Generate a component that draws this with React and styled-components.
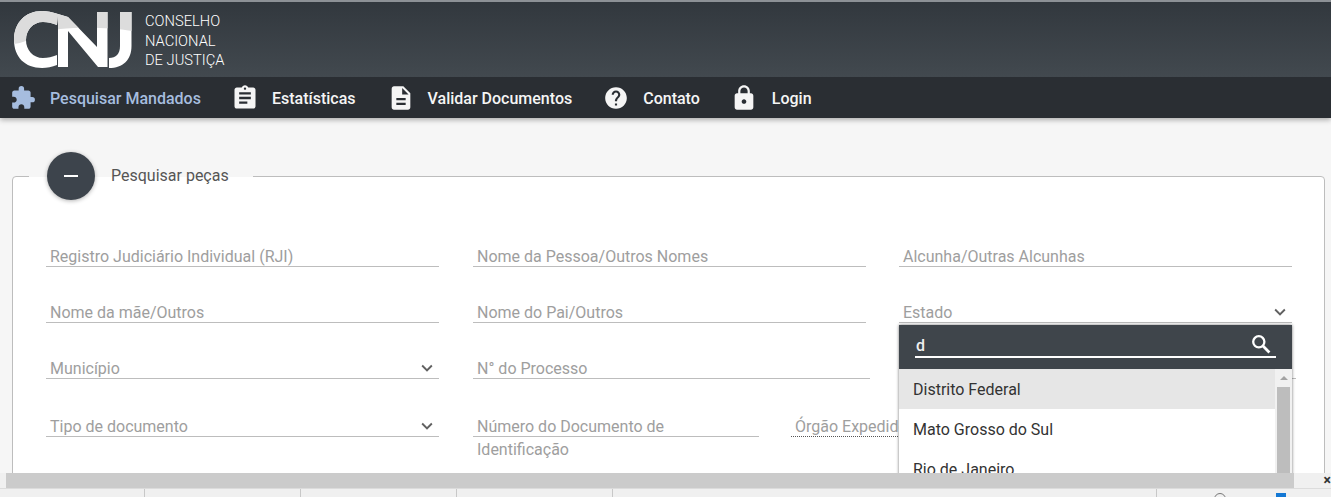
import React from 'react';
import styled, { createGlobalStyle } from 'styled-components';
import {
  MdAssignment,
  MdDescription,
  MdExtension,
  MdHelp,
  MdLock,
  MdExpandMore,
} from 'react-icons/md';

const GlobalStyle = createGlobalStyle`
  html, body {
    margin: 0;
    padding: 0;
    height: 100%;
    overflow: hidden;
    background: #f6f6f6;
    font-family: Roboto, "Liberation Sans", sans-serif;
  }
  #root {
    height: 100%;
  }
`;

const Page = styled.div`
  height: 497px;
  display: flex;
  flex-direction: column;
  overflow: hidden;
`;

const Header = styled.header`
  position: relative;
  z-index: 2;
  flex: none;
  box-shadow: 0 2px 5px rgba(0, 0, 0, 0.3);
`;

const Brand = styled.div`
  height: 75px;
  display: flex;
  align-items: center;
  padding-left: 14px;
  gap: 13px;
  border-top: 2px solid #8d9196;
  background: linear-gradient(to bottom, #32383e, #42494f);
`;

const BrandName = styled.div`
  font-size: 14.7px;
  font-weight: 300;
  line-height: 19.5px;
  color: #fff;
  padding-top: 4px;
`;

const Nav = styled.nav`
  height: 41px;
  box-sizing: border-box;
  display: flex;
  align-items: center;
  padding: 1px 0 0 8px;
  background: #2a2e33;
`;

const NavItem = styled.a`
  display: flex;
  align-items: center;
  gap: ${(p) => p.$gap || 13}px;
  margin-right: ${(p) => p.$after || 30}px;
  font-size: 16px;
  font-weight: 500;
  color: ${(p) => (p.$active ? '#a6bddf' : '#f5f5f5')};
  svg {
    flex: none;
  }
`;

const NavIconSlot = styled.span`
  display: flex;
  flex: none;
  width: ${(p) => p.$w}px;
  justify-content: center;
`;

const Main = styled.main`
  position: relative;
  flex: 1;
  min-height: 0;
  overflow: hidden;
  padding: 58px 6px 0 12px;
`;

const Card = styled.section`
  position: relative;
  height: 400px;
  box-sizing: border-box;
  background: #fff;
  border: 1px solid #bdbdbd;
  border-radius: 4px 4px 0 0;
  padding: 66px 33px 0 33px;
`;

const Legend = styled.div`
  position: absolute;
  left: 16px;
  top: -25px;
  display: flex;
  align-items: center;
  gap: 16px;
  padding: 0 24px 0 18px;
  height: 48px;
  background: linear-gradient(to bottom, #f6f6f6 0, #f6f6f6 25px, #fff 25px);
`;

const RoundButton = styled.button`
  width: 48px;
  height: 48px;
  border: 0;
  border-radius: 50%;
  padding: 0;
  background: #3d444c;
  box-shadow: 0 1px 4px rgba(0, 0, 0, 0.3);
  display: flex;
  align-items: center;
  justify-content: center;
`;

const Minus = styled.span`
  display: block;
  width: 14px;
  height: 2px;
  background: #fff;
`;

const LegendText = styled.span`
  font-size: 16px;
  color: #555;
  margin-top: -1px;
`;

const Row = styled.div`
  display: flex;
  margin-bottom: ${(p) => p.$after || 32}px;
`;

const Field = styled.div`
  flex: none;
  width: ${(p) => p.$w || 393}px;
  margin-right: ${(p) => p.$gap || 0}px;
`;

const FieldLine = styled.div`
  height: 24px;
  box-sizing: border-box;
  display: flex;
  align-items: center;
  justify-content: space-between;
  padding: 3px 1px 0 4px;
  border-bottom: 1px ${(p) => (p.$dotted ? 'dotted #555' : 'solid #bdbdbd')};
  font-size: 16px;
  color: #9e9e9e;
  white-space: nowrap;
  overflow: hidden;
`;

const Chevron = styled(MdExpandMore)`
  color: #616161;
  flex: none;
`;

const SecondLine = styled.div`
  font-size: 16px;
  color: #9e9e9e;
  padding: 3px 0 0 4px;
`;

const Dropdown = styled.div`
  position: absolute;
  left: 899px;
  top: 207px;
  width: 393px;
  height: 200px;
  background: #fff;
  box-shadow: 0 0 3px rgba(0, 0, 0, 0.55);
  z-index: 1;
`;

const SearchHead = styled.div`
  height: 44px;
  box-sizing: border-box;
  background: #3f454b;
  padding: 9px 16px 0 16px;
`;

const SearchBox = styled.div`
  height: 24px;
  box-sizing: border-box;
  display: flex;
  align-items: center;
  justify-content: space-between;
  border-bottom: 2px solid #fff;
  padding: 1px 0 0 1px;
  font-size: 16px;
  font-weight: 500;
  color: #f0f0f0;
  svg {
    flex: none;
    margin-right: 5px;
    margin-top: -3px;
  }
`;

const ListArea = styled.div`
  display: flex;
`;

const Options = styled.div`
  flex: 1;
`;

const Option = styled.div`
  height: 40px;
  display: flex;
  align-items: center;
  padding: 1px 0 0 14px;
  box-sizing: border-box;
  font-size: 16px;
  color: #333;
  background: ${(p) => (p.$active ? '#e6e6e6' : '#fff')};
`;

const ListScroll = styled.div`
  flex: none;
  width: 17px;
  height: 156px;
  box-sizing: border-box;
  padding: 0 2px;
  background: #f1f1f1;
  display: flex;
  flex-direction: column;
`;

const ScrollArrow = styled.span`
  display: block;
  align-self: center;
  margin: 7px 0 7px;
  border-left: 4px solid transparent;
  border-right: 4px solid transparent;
  border-bottom: 4px solid #a3a3a3;
`;

const ScrollThumb = styled.span`
  display: block;
  flex: 1;
  background: #bdbdbd;
`;

const PageScrollbar = styled.div`
  position: relative;
  z-index: 2;
  flex: none;
  height: 15px;
  display: flex;
  background: #f0f0f0;
  padding-left: 6px;
`;

const PageThumb = styled.div`
  width: 1288px;
  background: #cbcbcb;
`;

const CloseMark = styled.span`
  margin-left: auto;
  font-size: 14px;
  line-height: 14px;
  font-weight: 700;
  color: #333;
`;

const StatusBar = styled.footer`
  position: relative;
  z-index: 2;
  flex: none;
  height: 9px;
  box-sizing: border-box;
  border-top: 1px solid #dcdcdc;
  background: #f0f0f0;
  display: flex;
  overflow: hidden;
`;

const StatusCell = styled.div`
  flex: none;
  width: ${(p) => p.$w}px;
  box-sizing: border-box;
  border-right: 1px solid #c8c8c8;
`;

const ZoomGlyph = styled.span`
  flex: none;
  width: 12px;
  height: 12px;
  box-sizing: border-box;
  margin: 4px 50px 0 57px;
  border: 1px solid #777;
  border-radius: 50%;
`;

const BlueMark = styled.span`
  flex: none;
  width: 10px;
  height: 12px;
  margin-top: 4px;
  background: #1478d4;
`;

function LogoShapes({ color }) {
  return (
    <g fill={color}>
      <path d="M58 14 C52 12 47 11 42 11 C25 11 14 23 14 40 C14 57 25 68 42 68 C47 68 52 67 57 65 L57 55 C52 57 48 58 43 58 C33 58 26 50 26 40 C26 30 33 22 43 22 C48 22 52 23 57 25 Z" />
      <path d="M58 14 L68 17 L68 67 L58 67 Z" />
      <path d="M68 17 L97 47 L97 12 L107.5 12 L107.5 67 L98 67 L68 31 Z" />
      <path d="M120 12 L131.5 12 L131.5 46 C131.5 60 123 68 109 68 L109 58 C116 58 120 54 120 46 Z" />
    </g>
  );
}

function CnjLogo() {
  return (
    <svg width="118" height="58" viewBox="14 11 118 58">
      <defs>
        <clipPath id="logo-top">
          <path d="M14 11 H132 V31 C110 27 80 27 60 29 C40 32 30 42 14 44 Z" />
        </clipPath>
      </defs>
      <LogoShapes color="#ffffff" />
      <g clipPath="url(#logo-top)">
        <LogoShapes color="#dcdcdc" />
      </g>
    </svg>
  );
}

function SearchGlyph() {
  return (
    <svg width="20" height="20" viewBox="0 0 20 20" fill="none" stroke="#fff">
      <circle cx="7.8" cy="7.8" r="5.6" strokeWidth="2.3" />
      <path d="M12 12 L18.4 18.4" strokeWidth="2.8" />
    </svg>
  );
}

export default function App() {
  return (
    <Page>
      <GlobalStyle />
      <Header>
        <Brand>
          <CnjLogo />
          <BrandName>
            CONSELHO
            <br />
            NACIONAL
            <br />
            DE JUSTIÇA
          </BrandName>
        </Brand>
        <Nav>
          <NavItem $active>
            <NavIconSlot $w={29}>
              <MdExtension size={26} />
            </NavIconSlot>
            Pesquisar Mandados
          </NavItem>
          <NavItem $after={31}>
            <MdAssignment size={28} />
            Estatísticas
          </NavItem>
          <NavItem $after={31}>
            <MdDescription size={28} />
            Validar Documentos
          </NavItem>
          <NavItem $gap={14}>
            <MdHelp size={26} />
            Contato
          </NavItem>
          <NavItem $gap={14}>
            <MdLock size={28} />
            Login
          </NavItem>
        </Nav>
      </Header>
      <Main>
        <Card>
          <Legend>
            <RoundButton>
              <Minus />
            </RoundButton>
            <LegendText>Pesquisar peças</LegendText>
          </Legend>
          <Row>
            <Field $gap={34}>
              <FieldLine>Registro Judiciário Individual (RJI)</FieldLine>
            </Field>
            <Field $gap={33}>
              <FieldLine>Nome da Pessoa/Outros Nomes</FieldLine>
            </Field>
            <Field>
              <FieldLine>Alcunha/Outras Alcunhas</FieldLine>
            </Field>
          </Row>
          <Row>
            <Field $gap={34}>
              <FieldLine>Nome da mãe/Outros</FieldLine>
            </Field>
            <Field $gap={33}>
              <FieldLine>Nome do Pai/Outros</FieldLine>
            </Field>
            <Field>
              <FieldLine>
                Estado
                <Chevron size={22} />
              </FieldLine>
            </Field>
          </Row>
          <Row $after={34}>
            <Field $gap={34}>
              <FieldLine>
                Município
                <Chevron size={22} />
              </FieldLine>
            </Field>
            <Field $w={397} $gap={29}>
              <FieldLine>N° do Processo</FieldLine>
            </Field>
            <Field $w={397}>
              <FieldLine />
            </Field>
          </Row>
          <Row>
            <Field $gap={34}>
              <FieldLine>
                Tipo de documento
                <Chevron size={22} />
              </FieldLine>
            </Field>
            <Field $w={286} $gap={32}>
              <FieldLine>Número do Documento de</FieldLine>
              <SecondLine>Identificação</SecondLine>
            </Field>
            <Field>
              <FieldLine $dotted>Órgão Expedidor</FieldLine>
            </Field>
          </Row>
        </Card>
        <Dropdown>
          <SearchHead>
            <SearchBox>
              d
              <SearchGlyph />
            </SearchBox>
          </SearchHead>
          <ListArea>
            <Options>
              <Option $active>Distrito Federal</Option>
              <Option>Mato Grosso do Sul</Option>
              <Option>Rio de Janeiro</Option>
            </Options>
            <ListScroll>
              <ScrollArrow />
              <ScrollThumb />
            </ListScroll>
          </ListArea>
        </Dropdown>
      </Main>
      <PageScrollbar>
        <PageThumb />
        <CloseMark>×</CloseMark>
      </PageScrollbar>
      <StatusBar>
        <StatusCell $w={145} />
        <StatusCell $w={156} />
        <StatusCell $w={156} />
        <StatusCell $w={156} />
        <StatusCell $w={544} />
        <ZoomGlyph />
        <BlueMark />
      </StatusBar>
    </Page>
  );
}
